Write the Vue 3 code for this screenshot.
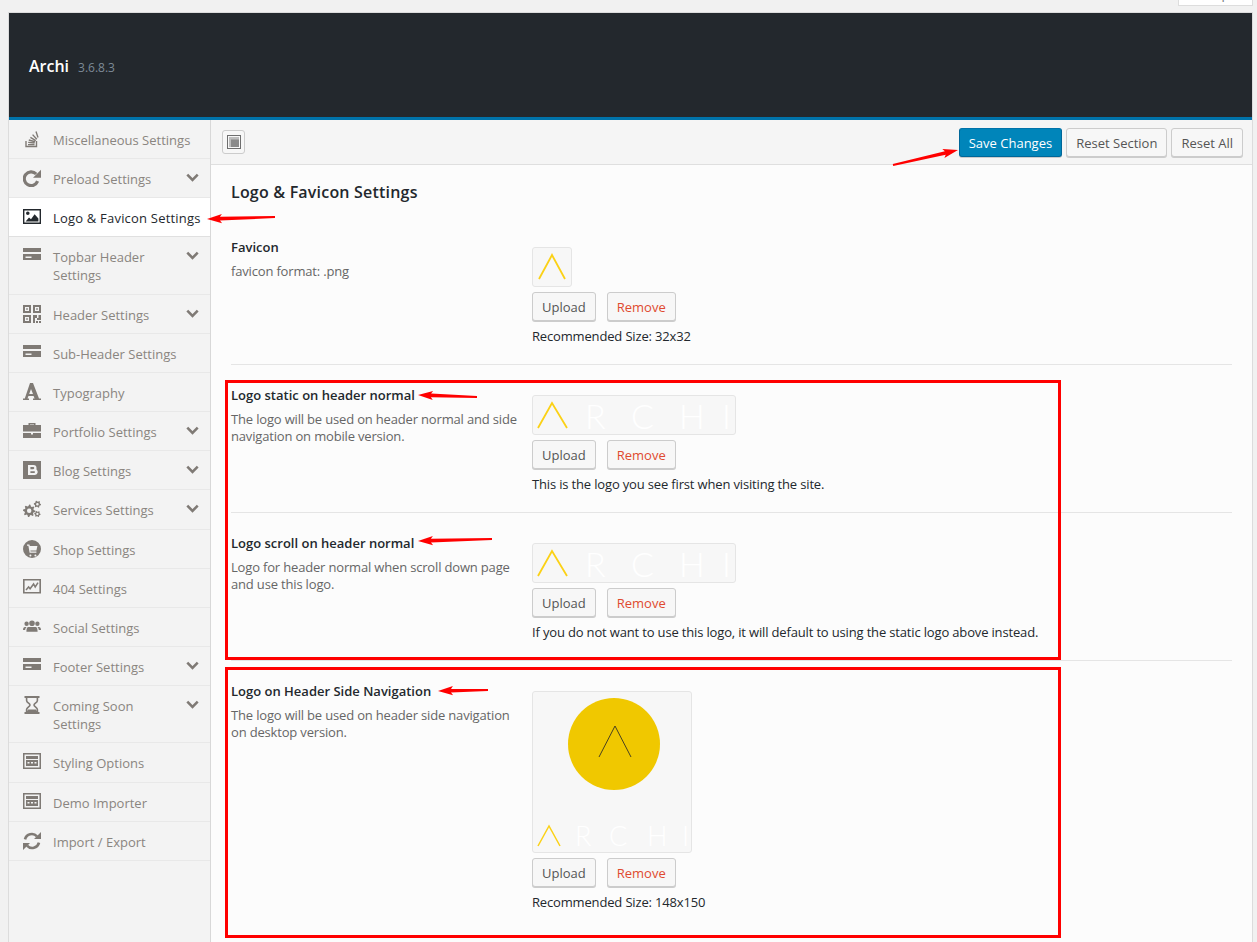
<script setup>
function gear(cx, cy, r, teeth) {
  let d = "";
  const step = (Math.PI * 2) / (teeth * 4);
  for (let i = 0; i < teeth * 4; i++) {
    const rad = i % 4 < 2 ? r : r * 0.74;
    const x = cx + Math.cos(i * step) * rad;
    const y = cy + Math.sin(i * step) * rad;
    d += (i === 0 ? "M" : "L") + x.toFixed(2) + " " + y.toFixed(2);
  }
  const h = r * 0.36;
  d += `Z M${cx - h} ${cy}a${h} ${h} 0 1 0 ${h * 2} 0a${h} ${h} 0 1 0 ${-h * 2} 0Z`;
  return d;
}

const card = { f: "M0 1h18v4H0zM0 7h18v6H0zM2.5 9.5v1.5h6V9.5z" };
const panel = { f: "M0 0h18v16H0zM1.5 1.5v13h15v-13zM3 3h12v3H3zM3 7h12v6H3zM4.5 9v1.5h2V9zM8 9v1.5h2V9zM11.5 9v1.5h2V9z" };

const icons = {
  misc: { s: "M3 11v5.5h10.5V11M5 14.6h6.5M5.2 12.4l6.4.6M5.8 10l6.2 1.7M7.4 7.4l5.4 3.2M9.6 4.6l4.2 4.6M13 1.6l2 5.8" },
  preload: { s: "M14.6 12.2A6.9 6.9 0 1 1 13.2 5", w: 3.2, f: "M18 .8v8h-8z" },
  image: { f: "M0 1h18v15H0zM1.4 2.4v12.2h15.2V2.4zM3 5.2a1.8 1.8 0 1 0 3.6 0a1.8 1.8 0 1 0-3.6 0zM2.6 13.4l3.4-4 2 1.8 3.6-5 3.8 4.4v2.8z" },
  card,
  qr: { f: "M0 0h8v8H0zM2 2v4h4V2zM3.2 3.2h1.6v1.6H3.2zM10 0h8v8h-8zM12 2v4h4V2zM13.2 3.2h1.6v1.6h-1.6zM0 10h8v8H0zM2 12v4h4v-4zM3.2 13.2h1.6v1.6H3.2zM10 10h4v3h1.5v-3H18v5h-4v-2h-2v5h-2zM13 16h2v2h-2zM16 16h2v2h-2z" },
  font: { f: "M7 0h3l6 15.4h2V17h-8v-1.6h1.6L10.6 13H5.4l-.9 2.4H6V17H0v-1.6h1.8zM8 6l-1.8 5h3.8z" },
  case: { f: "M5.5 3V1h7v2H18v6.5H0V3zM7 2.4V3h4v-.6zM0 11h8v1.5h2V11h8v5H0z" },
  blog: { f: "M0 0h18v18H0zM5 4v10h7a3 3 0 0 0 1.5-5.4V7a3 3 0 0 0-3-3zM7.4 6h2.8a1 1 0 0 1 0 2.2H7.4zM7.4 10.2h4a1 1 0 0 1 0 1.8h-4z" },
  gears: { f: gear(6.2, 10.8, 6.2, 8) + gear(14.4, 4.2, 3.6, 6) + gear(14.4, 14, 3.2, 6) },
  shop: { f: "M9 0a9 9 0 1 0 0 18A9 9 0 1 0 9 0zM4 4.6h2.4l.4 1.4h7.6l-1 4.6H7.4l.2 1h5.8v1.2H6.6L5.4 5.8H4zM7.4 14.4a1 1 0 1 0 0 2a1 1 0 1 0 0-2zM12.4 14.4a1 1 0 1 0 0 2a1 1 0 1 0 0-2z" },
  chart: { f: "M0 0h18v14.5H0zM1.6 1.6v11.3h14.8V1.6z", s: "M3 11l2.6-3 1.5 1.8L10.6 5l1.6 3L15 3.6", w: 1.5 },
  social: { f: "M9 2.5a2.8 2.8 0 1 0 0 5.6a2.8 2.8 0 1 0 0-5.6zM3.6 3.6a2.2 2.2 0 1 0 0 4.4a2.2 2.2 0 1 0 0-4.4zM14.4 3.6a2.2 2.2 0 1 0 0 4.4a2.2 2.2 0 1 0 0-4.4zM5.4 9h7.2c1.4 0 2 1.6 2 4.8H3.4C3.4 10.6 4 9 5.4 9zM2 9h1.6C2.6 10 2.2 11 2.2 12H0C0 10.2.8 9 2 9zM14.4 9H16c1.2 0 2 1.2 2 3h-2.2c0-1-.4-2-1.4-3z" },
  glass: { f: "M1.5 0h15v2h-15zM1.5 16h15v2h-15zM5 13.5h8L14.4 16H3.6z", s: "M3.6 2v2.4c0 2.4 3.4 3 3.4 4.6s-3.4 2.2-3.4 4.6V16M14.4 2v2.4c0 2.4-3.4 3-3.4 4.6s3.4 2.2 3.4 4.6V16", w: 1.6 },
  panel,
  sync: { s: "M2 7.4a7 7 0 0 1 12-3M16 10.6a7 7 0 0 1-12 3", w: 2.6, f: "M18 0v7h-7zM0 18v-7h7z" },
};

const menu = [
  { label: "Miscellaneous Settings", icon: "misc" },
  { label: "Preload Settings", icon: "preload", sub: true },
  { label: "Logo & Favicon Settings", icon: "image", active: true },
  { label: "Topbar Header Settings", icon: "card", sub: true },
  { label: "Header Settings", icon: "qr", sub: true },
  { label: "Sub-Header Settings", icon: "card" },
  { label: "Typography", icon: "font" },
  { label: "Portfolio Settings", icon: "case", sub: true },
  { label: "Blog Settings", icon: "blog", sub: true },
  { label: "Services Settings", icon: "gears", sub: true },
  { label: "Shop Settings", icon: "shop" },
  { label: "404 Settings", icon: "chart" },
  { label: "Social Settings", icon: "social" },
  { label: "Footer Settings", icon: "card", sub: true },
  { label: "Coming Soon Settings", icon: "glass", sub: true },
  { label: "Styling Options", icon: "panel" },
  { label: "Demo Importer", icon: "panel" },
  { label: "Import / Export", icon: "sync" },
];

const rows = [
  { title: "Favicon", desc: "favicon format: .png", kind: "fav", note: "Recommended Size: 32x32" },
  { title: "Logo static on header normal", desc: "The logo will be used on header normal and side navigation on mobile version.", kind: "wide", note: "This is the logo you see first when visiting the site." },
  { title: "Logo scroll on header normal", desc: "Logo for header normal when scroll down page and use this logo.", kind: "wide", note: "If you do not want to use this logo, it will default to using the static logo above instead." },
  { title: "Logo on Header Side Navigation", desc: "The logo will be used on header side navigation on desktop version.", kind: "tall", note: "Recommended Size: 148x150" },
];

const arrows = [
  [275, 217, 207, 219],
  [893, 165, 958, 150],
  [477, 397, 418, 395],
  [492, 539, 418, 541],
  [488, 690, 438, 691],
];

function arrowShape(a) {
  const [x1, y1, x2, y2] = a;
  const len = Math.hypot(x2 - x1, y2 - y1);
  const ux = (x2 - x1) / len;
  const uy = (y2 - y1) / len;
  const at = (along, side) => `${(x2 - ux * along - uy * side).toFixed(1)},${(y2 - uy * along + ux * side).toFixed(1)}`;
  return [
    at(len, 1.1),
    at(13, 1.8),
    at(15, 4.6),
    at(0, 0),
    at(15, -4.6),
    at(13, -1.8),
    at(len, -1.1),
  ].join(" ");
}
</script>

<template>
  <div class="page">
    <div class="corner">
      <span class="corner_text">Help</span>
    </div>
    <div class="panel">
      <header class="top">
        <span class="name">Archi</span>
        <span class="version">3.6.8.3</span>
      </header>
      <div class="body">
        <nav class="side">
          <a v-for="item in menu" :key="item.label" class="item" :class="{ active: item.active }">
            <svg class="icon" viewBox="0 0 18 18">
              <path v-if="icons[item.icon].f" :d="icons[item.icon].f" fill-rule="evenodd" />
              <path v-if="icons[item.icon].s" :d="icons[item.icon].s" class="line" :stroke-width="icons[item.icon].w || 1.4" />
            </svg>
            <span class="label">{{ item.label }}</span>
            <svg v-if="item.sub" class="more" viewBox="0 0 12 8"><path d="M1.2 1.4L6 6.2l4.8-4.8" /></svg>
          </a>
        </nav>
        <main class="main">
          <div class="bar">
            <button class="expand">
              <svg viewBox="0 0 14 14" width="14" height="14">
                <path d="M0 0h14v14H0zM1 1v12h12V1z" fill="#6e6e6e" fill-rule="evenodd" />
                <path d="M2 2h10v10H2z" fill="#bdbdbd" />
                <path d="M4 4.5h8V12H4z" fill="#8a8a8a" />
              </svg>
            </button>
            <div class="actions">
              <button class="btn save">Save Changes</button>
              <button class="btn">Reset Section</button>
              <button class="btn">Reset All</button>
            </div>
          </div>
          <section class="content">
            <h2>Logo &amp; Favicon Settings</h2>
            <div v-for="row in rows" :key="row.title" class="row">
              <div class="info">
                <h4>{{ row.title }}</h4>
                <p>{{ row.desc }}</p>
              </div>
              <div class="field">
                <div class="preview" :class="row.kind">
                  <svg v-if="row.kind === 'fav'" width="38" height="38" viewBox="0 0 38 38">
                    <path d="M6 31L19 7l13 24" class="gold" stroke-width="1.8" />
                  </svg>
                  <svg v-else-if="row.kind === 'wide'" width="202" height="38" viewBox="0 0 202 38">
                    <path d="M5 32L19 7l15 25" class="gold" stroke-width="1.8" />
                    <text class="logo_text" font-size="34" y="33">
                      <tspan x="52">R</tspan><tspan x="98">C</tspan><tspan x="146">H</tspan><tspan x="189">I</tspan>
                    </text>
                  </svg>
                  <svg v-else width="158" height="160" viewBox="0 0 158 160">
                    <circle cx="81" cy="52" r="46" fill="#f0c800" />
                    <path d="M66 65L82 34l16 31" fill="none" stroke="#4a4220" stroke-width="1" />
                    <path d="M5 154L16 134l11 20" class="gold" stroke-width="1.5" />
                    <text class="logo_text" font-size="27" y="154">
                      <tspan x="42">R</tspan><tspan x="76">C</tspan><tspan x="114">H</tspan><tspan x="149">I</tspan>
                    </text>
                  </svg>
                </div>
                <div class="upload">
                  <button class="btn">Upload</button>
                  <button class="btn remove">Remove</button>
                </div>
                <div class="note">{{ row.note }}</div>
              </div>
            </div>
          </section>
        </main>
      </div>
    </div>

    <div class="mark mark_a"></div>
    <div class="mark mark_b"></div>
    <svg class="arrows" width="1257" height="942">
      <polygon v-for="(a, i) in arrows" :key="i" :points="arrowShape(a)" fill="#ff0000" />
    </svg>
  </div>
</template>

<style>
html, body {
  margin: 0;
  background: #f1f1f1;
}
</style>

<style scoped>
.page {
  position: relative;
  height: 942px;
  overflow: hidden;
  padding: 12px 4px 0 8px;
  box-sizing: border-box;
  background: #f1f1f1;
  font-family: "Open Sans", "Noto Sans", sans-serif;
  font-size: 13px;
  line-height: 18px;
  color: #23282d;
}

.corner {
  position: absolute;
  top: 0;
  right: 4px;
  width: 75px;
  height: 6px;
  overflow: hidden;
  background: #fff;
  border: 1px solid #ddd;
  border-top: none;
  box-sizing: border-box;
  text-align: center;
}

.corner_text {
  position: relative;
  top: -15px;
  color: #72777c;
}

.panel {
  border: 1px solid #dcdcdc;
  border-bottom: none;
  height: 100%;
  display: flex;
  flex-direction: column;
}

.top {
  height: 104px;
  flex: none;
  background: #23282d;
  border-bottom: 3px solid #0073aa;
  display: flex;
  align-items: center;
  padding-left: 20px;
  gap: 9px;
}

.name {
  color: #fff;
  font-size: 16px;
  font-weight: 600;
  position: relative;
  top: 1px;
}

.version {
  color: #7d8a96;
  font-size: 12px;
  position: relative;
  top: 3px;
}

.body {
  display: flex;
  flex: 1;
  min-height: 0;
}

.side {
  width: 201px;
  flex: none;
  background: #f3f3f3;
  border-right: 1px solid #d8d8d8;
}

.item {
  display: flex;
  align-items: flex-start;
  padding: 11px 11px 9.17px 14px;
  border-bottom: 1px solid #e8e8e8;
  color: #8a8580;
}

.item.active {
  background: #fff;
  color: #23282d;
  border-bottom-color: #e0e0e0;
}

.icon {
  width: 18px;
  height: 18px;
  flex: none;
  margin-top: -1px;
  margin-right: 12px;
  fill: #7f7a75;
}

.active .icon {
  fill: #23282d;
}

.icon .line {
  fill: none;
  stroke: #7f7a75;
}

.label {
  flex: 1;
  white-space: normal;
}

.active .label {
  white-space: nowrap;
  letter-spacing: 0.2px;
}

.more {
  width: 13px;
  height: 9px;
  flex: none;
  margin-top: 3px;
  margin-left: 6px;
}

.more path {
  fill: none;
  stroke: #7f7a75;
  stroke-width: 2.4;
}

.main {
  flex: 1;
  min-width: 0;
  display: flex;
  flex-direction: column;
}

.bar {
  height: 45px;
  flex: none;
  box-sizing: border-box;
  background: #f5f5f5;
  border-bottom: 1px solid #dfdfdf;
  display: flex;
  align-items: flex-start;
  justify-content: space-between;
  padding: 8px 9px 0 11px;
}

.expand {
  width: 23px;
  height: 24px;
  margin-top: 2px;
  padding: 0;
  background: #f7f7f7;
  border: 1px solid #ccc;
  border-radius: 3px;
  display: flex;
  align-items: center;
  justify-content: center;
}

.actions {
  display: flex;
  gap: 4px;
}

.btn {
  height: 29px;
  padding: 0 9px;
  background: #f7f7f7;
  border: 1px solid #ccc;
  border-radius: 3px;
  box-shadow: 0 1px 0 #ccc;
  color: #555;
  font-family: inherit;
  font-size: 13px;
  line-height: 26px;
  white-space: nowrap;
}

.btn.save {
  background: #0085ba;
  border-color: #0073aa #006799 #006799;
  color: #fff;
}

.content {
  flex: 1;
  background: #fcfcfc;
  padding: 0 20px;
}

h2 {
  margin: 0;
  padding-top: 15px;
  height: 37px;
  font-size: 16px;
  line-height: 24px;
  font-weight: 600;
  letter-spacing: 0.2px;
  color: #23282d;
}

.row {
  display: flex;
  padding: 30px 0 18px;
  border-bottom: 1px solid #e5e5e5;
}

.row:last-child {
  border-bottom: none;
}

.info {
  width: 290px;
  margin-right: 11px;
  flex: none;
}

h4 {
  margin: 0;
  font-size: 13px;
  line-height: 18px;
  font-weight: 600;
  position: relative;
  top: -9px;
}

p {
  margin: 0;
  color: #666;
  font-size: 13px;
  line-height: 17px;
  letter-spacing: -0.17px;
  position: relative;
  top: -2px;
}

.preview {
  background: #f7f7f7;
  border: 1px solid #e5e5e5;
  border-radius: 3px;
  line-height: 0;
}

.preview.fav {
  width: 38px;
  height: 38px;
}

.preview.wide {
  width: 202px;
  height: 38px;
}

.preview.tall {
  width: 158px;
  height: 160px;
}

.gold {
  fill: none;
  stroke: #fbd116;
}

.logo_text {
  font-family: Lato, sans-serif;
  font-weight: 300;
  fill: #fff;
}

.upload {
  display: flex;
  gap: 11px;
  margin-top: 5px;
}

.remove {
  color: #e04a2f;
}

.note {
  margin-top: 5px;
  height: 20px;
  line-height: 20px;
  letter-spacing: -0.16px;
  white-space: nowrap;
}

.mark {
  position: absolute;
  left: 225px;
  width: 830px;
  border: 3px solid #ff0000;
}

.mark_a {
  top: 380px;
  height: 274px;
}

.mark_b {
  top: 667px;
  height: 265px;
}

.arrows {
  position: absolute;
  top: 0;
  left: 0;
  pointer-events: none;
}
</style>
